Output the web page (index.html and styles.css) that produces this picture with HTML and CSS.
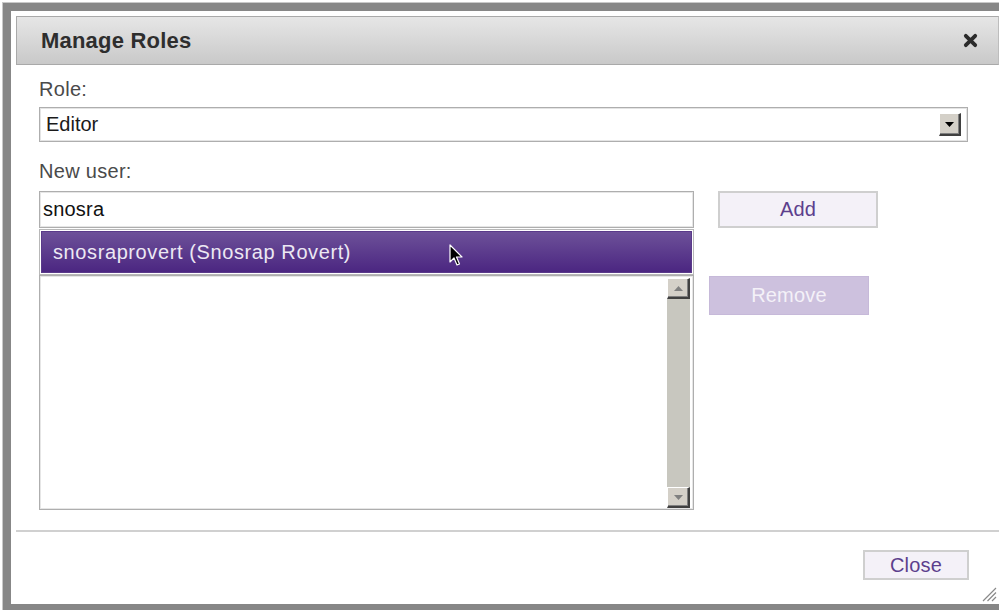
FILE: index.html
```html
<!DOCTYPE html>
<html lang="en">
<head>
<meta charset="utf-8">
<title>Manage Roles</title>
<link rel="stylesheet" href="styles.css">
</head>
<body>
<div class="screen">
  <div class="frame">
    <div class="dialog">
      <div class="dialog-header">
        <span class="dialog-title">Manage Roles</span>
        <span class="dialog-close" aria-label="Close">
          <svg width="15" height="15" viewBox="0 0 15 15"><path d="M2.8 2.8 L12.2 12.2 M12.2 2.8 L2.8 12.2" stroke="#2b2b2b" stroke-width="3.8" stroke-linecap="round"/></svg>
        </span>
      </div>

      <div class="dialog-body">
        <div class="field-label role-label">Role:</div>
        <div class="select">
          <span class="select-value">Editor</span>
          <span class="bevel-btn select-btn">
            <svg width="9" height="5" viewBox="0 0 9 5"><path d="M0 0 H9 L4.5 5 Z" fill="#000"/></svg>
          </span>
        </div>

        <div class="field-label user-label">New user:</div>
        <div class="user-row">
          <div class="user-input-wrap">
            <div class="text-input">snosra</div>
            <div class="suggest">
              <div class="suggest-item">snosraprovert (Snosrap Rovert)</div>
            </div>
          </div>
          <button class="btn add-btn" type="button">Add</button>
        </div>

        <div class="members-row">
          <div class="listbox">
            <div class="listbox-items"></div>
            <div class="scrollbar">
              <span class="bevel-btn scroll-btn">
                <svg width="9" height="5" viewBox="0 0 9 5"><path d="M0 5 H9 L4.5 0 Z" fill="#808080"/></svg>
              </span>
              <span class="scroll-track"></span>
              <span class="bevel-btn scroll-btn">
                <svg width="9" height="5" viewBox="0 0 9 5"><path d="M0 0 H9 L4.5 5 Z" fill="#808080"/></svg>
              </span>
            </div>
          </div>
          <button class="btn remove-btn" type="button" disabled>Remove</button>
        </div>
      </div>

      <div class="dialog-footer">
        <button class="btn close-btn" type="button">Close</button>
      </div>

      <svg class="resize-grip" width="15" height="15" viewBox="0 0 15 15">
        <path d="M14 1 L1 14 M14 5.5 L5.5 14 M14 10 L10 14" stroke="#8a8a8a" stroke-width="1.2"/>
      </svg>

      <svg class="pointer" width="14" height="24" viewBox="0 0 14 24">
        <path d="M1 1 L1 18 L5 14 L8 21 L10.5 20 L7.5 13 L13 13 Z" fill="#000" stroke="#fff" stroke-width="1.2" stroke-linejoin="round"/>
      </svg>
    </div>
  </div>
</div>
</body>
</html>
```

FILE: styles.css
```css
* { box-sizing: border-box; }

html, body {
  margin: 0;
  padding: 0;
  background: #fff;
  width: 999px;
  height: 610px;
  overflow: hidden;
  font-family: "Liberation Sans", Arial, sans-serif;
}

.screen {
  padding: 2px 0 0 2px;
  height: 610px;
}

.frame {
  height: 608px;
  border-top: 1px solid #c9c9c9;
  border-left: 1px solid #c9c9c9;
}

.dialog {
  position: relative;
  height: 607px;
  border-top: 8px solid #878787;
  border-left: 8px solid #878787;
  border-bottom: 6px solid #878787;
  padding: 5px 0 0 5px;
  background: #fff;
  display: flex;
  flex-direction: column;
}

/* title bar */
.dialog-header {
  height: 49px;
  border: 1px solid #a9a9a9;
  border-right-color: #bdbdbd;
  background: linear-gradient(#e6e6e6, #c9c9c9);
  display: flex;
  align-items: center;
  justify-content: space-between;
  padding: 0 20px 0 24px;
}

.dialog-title {
  font-weight: bold;
  font-size: 22px;
  color: #2e2e2e;
  letter-spacing: 0.2px;
}

.dialog-close {
  display: flex;
  width: 15px;
  height: 15px;
}

/* form area */
.dialog-body {
  padding: 0 31px 0 23px;
  display: flex;
  flex-direction: column;
}

.field-label {
  font-size: 20px;
  line-height: 24px;
  color: #4a4a4a;
  letter-spacing: 0.3px;
}

.role-label { margin-top: 12px; }
.user-label { margin-top: 17px; }

.select {
  margin-top: 6px;
  height: 35px;
  border: 1px solid #aeaeae;
  box-shadow: inset 0 0 0 1px #e4e4e4;
  display: flex;
  align-items: center;
  justify-content: space-between;
  padding: 0 6px 0 6px;
}

.select-value {
  font-size: 20px;
  color: #1a1a1a;
}

/* classic raised button face */
.bevel-btn {
  display: flex;
  align-items: center;
  justify-content: center;
  background: #d4d0c8;
  border-top: 1px solid #fff;
  border-left: 1px solid #fff;
  border-right: 2px solid #404040;
  border-bottom: 2px solid #404040;
  box-shadow: inset -1px -1px 0 #808080;
}

.select-btn {
  width: 22px;
  height: 23px;
}

.user-row {
  margin-top: 8px;
  display: flex;
  align-items: flex-start;
}

.user-input-wrap {
  position: relative;
  width: 655px;
}

.text-input {
  height: 37px;
  border: 1px solid #aeaeae;
  box-shadow: inset 0 0 0 1px #e6e6e6;
  font-size: 20px;
  line-height: 35px;
  padding-left: 3px;
  color: #111;
  letter-spacing: 0.2px;
}

/* autocomplete popup */
.suggest {
  position: absolute;
  top: 38px;
  left: 0;
  width: 655px;
  height: 46px;
  border: 1px solid #b8b8b8;
  background: #fff;
  padding: 1px;
  z-index: 2;
}

.suggest-item {
  height: 100%;
  background: linear-gradient(#6d5199, #4b2681);
  border: 1px solid #5a3a8a;
  color: #ece8f3;
  font-size: 20px;
  line-height: 40px;
  padding-left: 11px;
  letter-spacing: 0.6px;
}

.btn {
  font-family: "Liberation Sans", Arial, sans-serif;
  font-size: 20px;
  padding: 0;
  cursor: pointer;
  letter-spacing: 0.2px;
}

.add-btn {
  margin-left: 24px;
  width: 160px;
  height: 37px;
  background: #f4f1f8;
  border: 2px solid #cfcfcf;
  color: #5c3f8d;
}

.members-row {
  margin-top: 47px;
  display: flex;
  align-items: flex-start;
}

.listbox {
  width: 655px;
  height: 235px;
  border: 1px solid #aeaeae;
  box-shadow: inset 0 0 0 1px #e6e6e6;
  display: flex;
  padding: 2px 3px 1px 2px;
}

.listbox-items { flex: 1; }

.scrollbar {
  width: 23px;
  display: flex;
  flex-direction: column;
  background: #c8c7bf;
}

.scroll-btn {
  width: 23px;
  height: 21px;
  flex: none;
}

.scroll-track { flex: 1; }

.remove-btn {
  margin-left: 15px;
  margin-top: 1px;
  width: 160px;
  height: 39px;
  background: #cdc1de;
  border: 1px solid #c6b9d9;
  color: #f4f1f8;
  cursor: default;
}

/* footer with separator */
.dialog-footer {
  margin-top: 20px;
  border-top: 2px solid #d0d0d0;
  display: flex;
  justify-content: flex-end;
  padding: 18px 30px 0 0;
}

.close-btn {
  width: 106px;
  height: 30px;
  background: #f4f1f8;
  border: 2px solid #cfcfcf;
  color: #5c3f8d;
  line-height: 24px;
}

.resize-grip {
  position: absolute;
  right: 2px;
  bottom: 2px;
}

.pointer {
  position: absolute;
  left: 438px;
  top: 233px;
  z-index: 5;
}
```
